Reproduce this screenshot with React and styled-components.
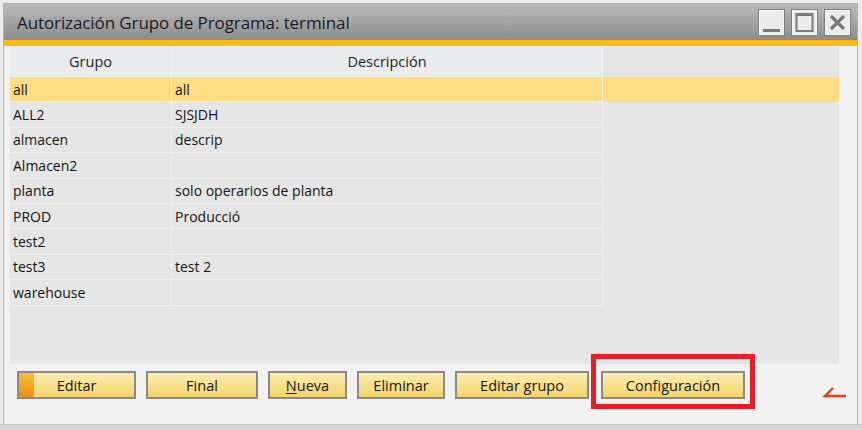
import React from "react";
import styled, { createGlobalStyle } from "styled-components";

const Global = createGlobalStyle`
  html, body { margin: 0; padding: 0; }
  body { background: #ebebeb; font-family: "Open Sans", "Noto Sans", sans-serif; }
`;

const Page = styled.div`
  position: relative;
  width: 862px;
  height: 430px;
  box-sizing: border-box;
  padding: 3px 4px 0 3px;
  background: #ececec;
  overflow: hidden;
`;

const Window = styled.div`
  width: 855px;
  height: 422px;
  box-sizing: border-box;
  border: 1px solid #b4b4b4;
  background: #f2f2f2;
  display: flex;
  flex-direction: column;
`;

const TitleBar = styled.div`
  height: 36px;
  flex: none;
  display: flex;
  align-items: center;
  justify-content: space-between;
  padding: 0 6px 0 13px;
  background: linear-gradient(#bababa, #8d8d8d);
`;

const Title = styled.div`
  font-family: "Open Sans", "Noto Sans", sans-serif;
  font-size: 17px;
  color: #1a1a26;
  letter-spacing: -0.1px;
`;

const Controls = styled.div`
  display: flex;
  gap: 6px;
  padding-top: 1px;
`;

const CtrlBtn = styled.div`
  width: 27px;
  height: 27px;
  box-sizing: border-box;
  border: 1px solid #7e7e7e;
  background: #ececec;
  box-shadow: inset 0 0 0 1px #f8f8f8;
  display: flex;
  align-items: center;
  justify-content: center;
`;

const Accent = styled.div`
  height: 6px;
  flex: none;
  background: #ffb913;
`;

const Body = styled.div`
  flex: 1;
  display: flex;
  flex-direction: column;
  padding: 1px 18px 0 6px;
`;

const Grid = styled.div`
  height: 317px;
  background: #e6e6e6;
  display: flex;
  flex-direction: column;
`;

const HeaderRow = styled.div`
  height: 30px;
  display: flex;
  flex: none;
`;

const HeadCell = styled.div`
  width: ${(p) => p.$w}px;
  flex: none;
  box-sizing: border-box;
  background: #e9ebed;
  border-right: 1px solid #f3f3f3;
  border-bottom: 1px solid #f3f3f3;
  display: flex;
  align-items: center;
  justify-content: center;
  font-size: 14.5px;
  color: #262626;
`;

const Row = styled.div`
  height: 25.4px;
  display: flex;
  flex: none;
  background: ${(p) => (p.$sel ? "#fddc82" : "transparent")};
`;

const Cell = styled.div`
  width: ${(p) => p.$w}px;
  flex: none;
  box-sizing: border-box;
  border-right: 1.5px solid ${(p) => (p.$sel ? "#f7f1e0" : "#f0f0f0")};
  border-bottom: 1.5px solid ${(p) => (p.$sel ? "#f7f1e0" : "#f0f0f0")};
  padding-left: 3px;
  display: flex;
  align-items: center;
  font-size: 14px;
  color: #141414;
  white-space: nowrap;
`;

const Filler = styled.div`
  flex: 1;
`;

const ButtonBar = styled.div`
  display: flex;
  gap: 10px;
  padding: 7px 0 0 7px;
`;

const Button = styled.div`
  position: relative;
  width: ${(p) => p.$w}px;
  margin-left: ${(p) => p.$ml || 0}px;
  height: 28px;
  box-sizing: border-box;
  border: 2px solid #8a8a8a;
  background: linear-gradient(#fcedb4, #f4d468);
  display: flex;
  align-items: center;
  justify-content: center;
  font-size: 14.5px;
  color: #161616;
  overflow: hidden;
  u { text-decoration-thickness: 1px; text-underline-offset: 2px; }
`;

const FocusStrip = styled.span`
  position: absolute;
  left: 0;
  top: 0;
  bottom: 0;
  width: 15px;
  background: linear-gradient(#f8bf3a, #ee8d10);
`;

const ButtonLabel = styled.span`
  position: relative;
`;

const Highlight = styled.div`
  position: absolute;
  left: 591px;
  top: 354px;
  width: 164px;
  height: 55px;
  box-sizing: border-box;
  border: 5px solid #ed1c24;
  pointer-events: none;
`;

const Grip = styled.svg`
  position: absolute;
  left: 822px;
  top: 385px;
`;

const BottomStrip = styled.div`
  position: absolute;
  left: 0;
  right: 0;
  bottom: 0;
  height: 5px;
  background: #d9d9d9;
  border-top: 1px solid #c4c4c4;
`;

const rows = [
  ["all", "all"],
  ["ALL2", "SJSJDH"],
  ["almacen", "descrip"],
  ["Almacen2", ""],
  ["planta", "solo operarios de planta"],
  ["PROD", "Producció"],
  ["test2", ""],
  ["test3", "test 2"],
  ["warehouse", ""],
];

export default function App() {
  return (
    <>
      <Global />
      <Page>
        <Window>
          <TitleBar>
            <Title>Autorización Grupo de Programa: terminal</Title>
            <Controls>
              <CtrlBtn>
                <svg width="25" height="25" viewBox="0 0 25 25">
                  <rect x="4" y="19" width="17" height="3" fill="#7a7a7a" />
                </svg>
              </CtrlBtn>
              <CtrlBtn>
                <svg width="25" height="25" viewBox="0 0 25 25">
                  <rect x="4.5" y="4" width="16" height="17" fill="none" stroke="#7a7a7a" strokeWidth="2" />
                  <rect x="4" y="3.5" width="17" height="2.5" fill="#7a7a7a" />
                </svg>
              </CtrlBtn>
              <CtrlBtn>
                <svg width="25" height="25" viewBox="0 0 25 25">
                  <path d="M6 6 L19 19 M19 6 L6 19" stroke="#7a7a7a" strokeWidth="3.2" />
                </svg>
              </CtrlBtn>
            </Controls>
          </TitleBar>
          <Accent />
          <Body>
            <Grid>
              <HeaderRow>
                <HeadCell $w={162}>Grupo</HeadCell>
                <HeadCell $w={431}>Descripción</HeadCell>
                <Filler />
              </HeaderRow>
              {rows.map(([g, d], i) => (
                <Row key={g} $sel={i === 0}>
                  <Cell $w={162} $sel={i === 0}>{g}</Cell>
                  <Cell $w={431} $sel={i === 0}>{d}</Cell>
                  <Filler />
                </Row>
              ))}
            </Grid>
            <ButtonBar>
              <Button $w={119}>
                <FocusStrip />
                <ButtonLabel>Editar</ButtonLabel>
              </Button>
              <Button $w={112}>Final</Button>
              <Button $w={79}>
                <span><u>N</u>ueva</span>
              </Button>
              <Button $w={88}>Eliminar</Button>
              <Button $w={134}>Editar grupo</Button>
              <Button $w={144} $ml={2}>Configuración</Button>
            </ButtonBar>
          </Body>
        </Window>
        <Highlight />
        <Grip width="26" height="16" viewBox="0 0 26 16">
          <path d="M11 3 L3 11 L24 11" fill="none" stroke="#f2380c" strokeWidth="2.4" />
        </Grip>
        <BottomStrip />
      </Page>
    </>
  );
}
